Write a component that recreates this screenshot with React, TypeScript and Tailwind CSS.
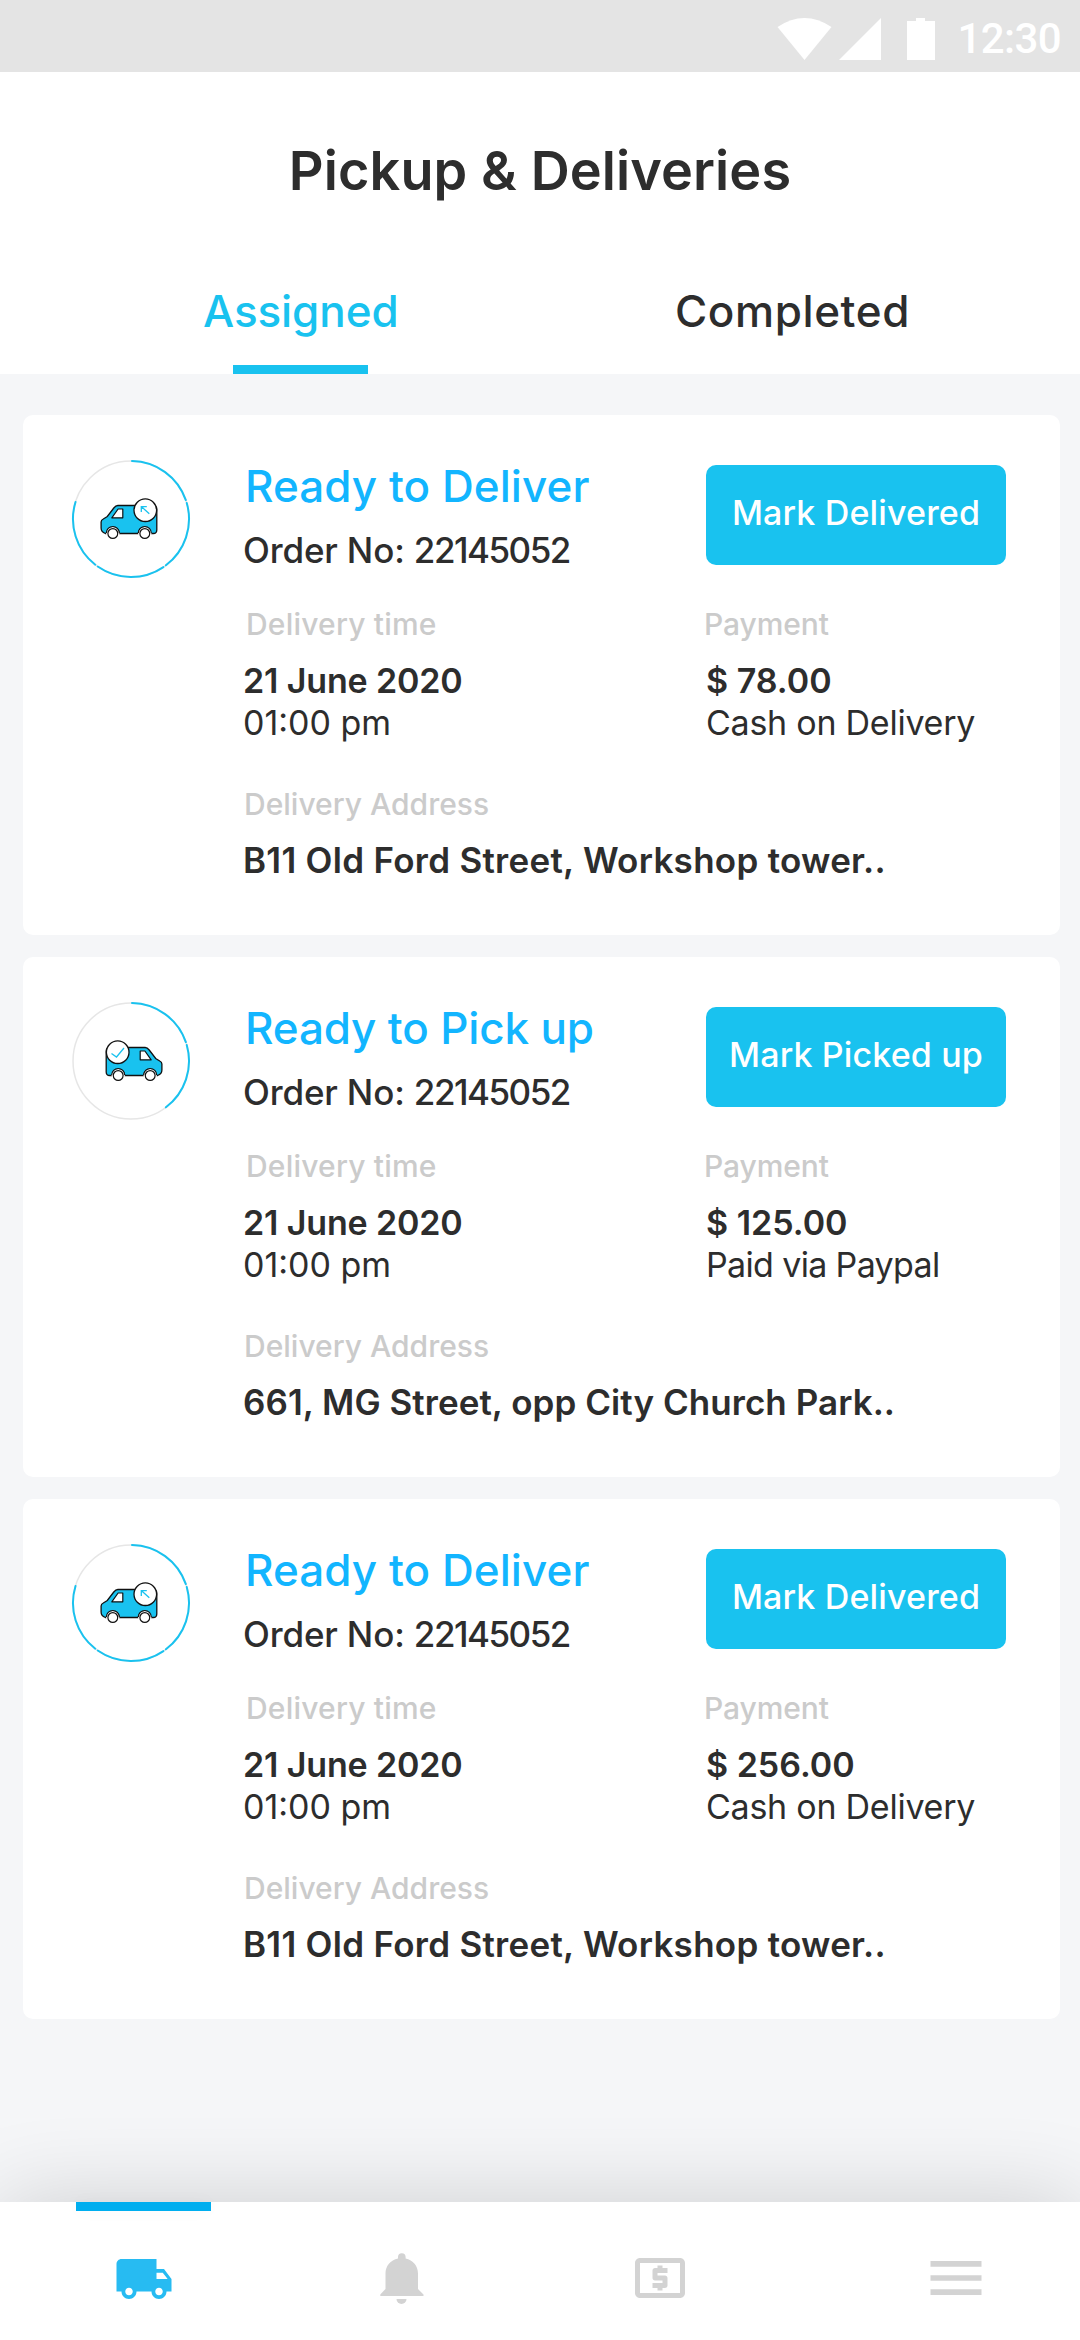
import React, {useState} from 'react';
import {MdLocalAtm, MdLocalShipping, MdMenu} from 'react-icons/md';

type OrderKind = 'deliver' | 'pickup';

interface Order {
  id: string;
  kind: OrderKind;
  number: string;
  date: string;
  time: string;
  amount: string;
  method: string;
  address: string;
  arcs: [number, number][];
}

const orders: Order[] = [
  {
    id: 'a',
    kind: 'deliver',
    number: '22145052',
    date: '21 June 2020',
    time: '01:00 pm',
    amount: '$ 78.00',
    method: 'Cash on Delivery',
    address: 'B11 Old Ford Street, Workshop tower..',
    arcs: [[1, 71], [74, 143], [146, 215], [218, 287]],
  },
  {
    id: 'b',
    kind: 'pickup',
    number: '22145052',
    date: '21 June 2020',
    time: '01:00 pm',
    amount: '$ 125.00',
    method: 'Paid via Paypal',
    address: '661, MG Street, opp City Church Park..',
    arcs: [[1, 71], [74, 143]],
  },
  {
    id: 'c',
    kind: 'deliver',
    number: '22145052',
    date: '21 June 2020',
    time: '01:00 pm',
    amount: '$ 256.00',
    method: 'Cash on Delivery',
    address: 'B11 Old Ford Street, Workshop tower..',
    arcs: [[1, 71], [74, 143], [146, 215], [218, 287]],
  },
];

const kinds = {
  deliver: {
    title: 'Ready to Deliver',
    action: 'Mark Delivered',
    titleClass: 'tracking-[0.05px]',
    methodClass: 'tracking-[-0.25px]',
    addressClass: 'tracking-[0.28px]',
  },
  pickup: {
    title: 'Ready to Pick up',
    action: 'Mark Picked up',
    titleClass: 'tracking-[-0.15px]',
    methodClass: 'tracking-[-0.65px]',
    addressClass: 'tracking-[0.05px]',
  },
};

// angles are in degrees, clockwise from 12 o'clock
const arcPath = (from: number, to: number, r = 58) => {
  const point = (deg: number) => {
    const a = ((deg - 90) * Math.PI) / 180;
    return `${(60 + r * Math.cos(a)).toFixed(2)} ${(60 + r * Math.sin(a)).toFixed(2)}`;
  };
  return `M${point(from)}A${r} ${r} 0 0 1 ${point(to)}`;
};

const VanBody = () => (
  <>
    <path
      d="M17.5 .5H52.5Q56.5 .5 56.5 4.5V25Q56.5 28.5 53 28.5H50A6 6 0 0 0 38 28.5H19A6 6 0 0 0 7 28.5H5Q.8 27 .8 23V17Q.8 15 3 14L7 11.5L13.5 3Q15.5 .5 17.5 .5Z"
      fill="#19c2ef"
      stroke="#111"
      strokeWidth="1.3"
    />
    <path d="M17.8 4H22.5V12.8H11.5Z" fill="#fff" stroke="#111" strokeWidth="1.2" strokeLinejoin="round" />
    <circle cx="12.5" cy="28.5" r="6.6" fill="#fff" />
    <circle cx="44.5" cy="28.5" r="6.6" fill="#fff" />
    <circle cx="12.5" cy="28.5" r="4.9" fill="#fff" stroke="#111" strokeWidth="1.2" />
    <circle cx="44.5" cy="28.5" r="4.9" fill="#fff" stroke="#111" strokeWidth="1.2" />
    <path d="M6 28A6.5 6.5 0 0 1 19 28M38 28A6.5 6.5 0 0 1 51 28" fill="none" stroke="#111" strokeWidth="1.2" />
    <circle cx="45" cy="5.2" r="11.3" fill="#fff" stroke="#111" strokeWidth="1.3" />
  </>
);

const OrderBadge: React.FC<{kind: OrderKind; arcs: [number, number][]}> = ({kind, arcs}) => (
  <svg viewBox="0 0 120 120" className="w-[120px] h-[120px] shrink-0">
    <circle cx="60" cy="60" r="58" fill="none" stroke="#e6e6e6" strokeWidth="1.5" />
    {arcs.map(([from, to]) => (
      <path key={from} d={arcPath(from, to)} fill="none" stroke="#19c2ef" strokeWidth="2" strokeLinecap="round" />
    ))}
    {kind === 'deliver' ? (
      <g transform="translate(29.3 46)">
        <VanBody />
        <path d="M49 8.8L41.5 2M41 7V1.7H46.5" fill="none" stroke="#19c2ef" strokeWidth="1.3" />
      </g>
    ) : (
      <>
        <g transform="translate(91.7 46) scale(-1 1)">
          <VanBody />
        </g>
        <path d="M40.5 52.5L45.5 56L53 47" fill="none" stroke="#19c2ef" strokeWidth="1.3" />
      </>
    )}
  </svg>
);

const StatusBar = () => (
  <div className="h-[72px] shrink-0 bg-[#e4e4e4] flex items-center justify-end pr-[19px] pt-1.5">
    <svg viewBox="0 0 160 42" className="w-[160px] h-[42px] fill-white mr-[20px]">
      <path d="M.5 9Q27.5 -9 54.5 9L27.5 42Z" />
      <path d="M104 0V42H62Z" />
      <path d="M139 0H148V3H158V42H130V3H139Z" />
    </svg>
    <span className="font-[Roboto,sans-serif] font-medium text-[42px] leading-[42px] tracking-[-0.6px] text-white">12:30</span>
  </div>
);

const tabs = [
  {name: 'Assigned', tracking: 'tracking-[-0.1px]'},
  {name: 'Completed', tracking: 'tracking-[0.6px]'},
];

const Header: React.FC<{active: string; onChange: (tab: string) => void}> = ({active, onChange}) => (
  <header className="bg-white h-[302px] shrink-0 flex flex-col">
    <h1 className="mt-[67px] text-center text-[54px] leading-[64px] font-semibold tracking-[0.1px] text-[#2d2d2d]">
      Pickup &amp; Deliveries
    </h1>
    <div className="mt-auto flex justify-between pl-[203px] pr-[170px]">
      {tabs.map(({name, tracking}) => (
        <button key={name} type="button" onClick={() => onChange(name)} className="flex flex-col items-center">
          <span className={`text-[44px] leading-[56px] font-medium ${tracking} ${active === name ? 'text-[#19c2ef]' : 'text-[#2d2d2d]'}`}>
            {name}
          </span>
          <span className={`mt-[26px] w-[135px] h-[9px] ${active === name ? 'bg-[#19c2ef]' : 'bg-transparent'}`} />
        </button>
      ))}
    </div>
  </header>
);

const Label: React.FC<{className?: string; children: React.ReactNode}> = ({className = '', children}) => (
  <p className={`text-[30px] leading-10 font-medium text-[#cbcbcb] ${className}`}>{children}</p>
);

const OrderCard: React.FC<{order: Order}> = ({order}) => {
  const kind = kinds[order.kind];
  return (
    <article className="h-[520px] bg-white rounded-[10px] flex text-[#2d2d2d] whitespace-nowrap">
      <div className="w-[220px] shrink-0 pl-12 pt-11">
        <OrderBadge kind={order.kind} arcs={order.arcs} />
      </div>
      <div className="flex-1 pt-[39px]">
        <div className="flex">
          <div className="w-[463px]">
            <h2 className={`pl-[2px] text-[44px] leading-[64px] font-medium text-[#12b5ff] ${kind.titleClass}`}>{kind.title}</h2>
            <p className="text-[35px] leading-[64px] font-medium tracking-[-0.15px]">
              Order No: <span className="tracking-[-1.5px]">{order.number}</span>
            </p>
          </div>
          <button type="button" className="mt-[11px] w-[300px] h-[100px] rounded-[10px] bg-[#19c2ef] text-white text-[34px] leading-[96px] font-medium tracking-[0.15px] pb-1">
            {kind.action}
          </button>
        </div>
        <div className="mt-[22px] flex">
          <div className="w-[463px]">
            <Label className="pl-[3px] tracking-[0.2px]">Delivery time</Label>
            <p className="mt-4 text-[34px] leading-[42px] font-semibold tracking-[-0.15px]">{order.date}</p>
            <p className="text-[34px] leading-[42px]">{order.time}</p>
          </div>
          <div>
            <Label className="-ml-[2px] tracking-[-0.1px]">Payment</Label>
            <p className="mt-4 text-[34px] leading-[42px] font-semibold">{order.amount}</p>
            <p className={`text-[34px] leading-[42px] ${kind.methodClass}`}>{order.method}</p>
          </div>
        </div>
        <Label className="mt-10 pl-px">Delivery Address</Label>
        <p className={`mt-[14px] text-[35px] leading-[44px] font-semibold ${kind.addressClass}`}>{order.address}</p>
      </div>
    </article>
  );
};

const BellIcon = () => (
  <svg viewBox="0 0 44 52" className="w-11 h-[52px] fill-current">
    <path d="M18 5.5V4A3.8 3.8 0 0 1 25.6 4V5.5C33 7 38 13 38 20.5V36L43.5 41.5V43H.3V41.5L5.5 36V20.5C5.5 13 10.5 7 18 5.5Z" />
    <path d="M16.5 46H26.5A5 5 0 0 1 16.5 46Z" />
  </svg>
);

const BottomNav = () => (
  <nav className="relative h-[138px] shrink-0 bg-white flex text-[#d3d3d3] shadow-[0_0_90px_rgba(0,0,0,0.16)]">
    <div className="w-[288px] pl-[76px]">
      <div className="w-[135px] h-[9px] bg-[#00aeef] shadow-[0_0_18px_rgba(0,0,0,0.03)]" />
      <MdLocalShipping className="ml-[37.5px] mt-[38px] w-[60px] h-[60px] text-[#27bbf2]" />
    </div>
    <div className="w-[342px] pl-[92px] pt-[51px]">
      <BellIcon />
    </div>
    <div className="w-[292px] pt-[46px]">
      <MdLocalAtm className="w-[60px] h-[60px]" />
    </div>
    <div className="pt-[42px]">
      <MdMenu className="w-[68px] h-[68px]" />
    </div>
  </nav>
);

export default function App() {
  const [tab, setTab] = useState('Assigned');

  return (
    <div className="w-[1080px] h-[2340px] overflow-hidden bg-[#f5f6f8] flex flex-col font-[Inter,sans-serif]">
      <StatusBar />
      <Header active={tab} onChange={setTab} />
      <main className="flex-1 pt-[41px] pl-[23px] pr-5 flex flex-col gap-[22px]">
        {orders.map((order) => (
          <OrderCard key={order.id} order={order} />
        ))}
      </main>
      <BottomNav />
    </div>
  );
}
